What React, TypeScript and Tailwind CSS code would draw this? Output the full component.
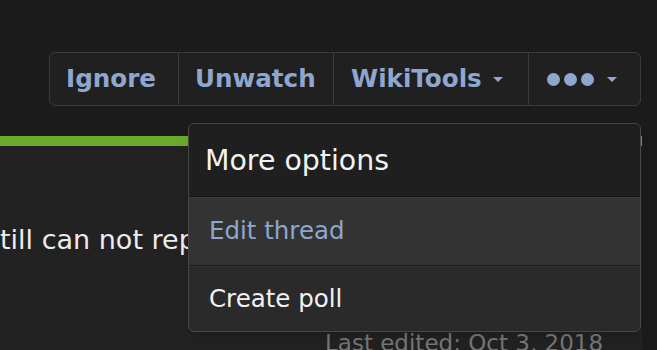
const font = { fontFamily: '"DejaVu Sans", Verdana, sans-serif' };

function Caret() {
  return (
    <span className="inline-block h-0 w-0 border-x-[5px] border-t-[5px] border-x-transparent border-t-[#8fa6cf]" />
  );
}

function ThreadActions() {
  return (
    <div className="ml-[49px] flex h-[54px] w-[592px] rounded-md border border-[#3b3b3b] bg-[#202020] text-[24.6px] font-bold text-[#8fa6cf]">
      <div className="flex w-[128px] items-center pl-[16px]">Ignore</div>
      <div className="flex w-[155px] items-center border-l border-[#3b3b3b] pl-[16px]">
        Unwatch
      </div>
      <div className="flex w-[195px] items-center gap-[11px] border-l border-[#3b3b3b] pl-[17px]">
        WikiTools
        <Caret />
      </div>
      <div className="flex flex-1 items-center gap-[13px] border-l border-[#3b3b3b] pl-[18px]">
        <div className="flex gap-[4px]">
          <span className="h-[13px] w-[13px] rounded-full bg-[#8fa6cf]" />
          <span className="h-[13px] w-[13px] rounded-full bg-[#8fa6cf]" />
          <span className="h-[13px] w-[13px] rounded-full bg-[#8fa6cf]" />
        </div>
        <Caret />
      </div>
    </div>
  );
}

function MoreOptionsMenu() {
  return (
    <div className="absolute left-[188px] top-[123px] w-[453px] overflow-hidden rounded-md border border-[#474747] bg-[#2a2a2a] shadow-lg">
      <div className="flex h-[72px] items-center bg-[#1f1f1f] pl-[16px] pt-[2px] text-[28.4px] text-[#f2f2f2]">
        More options
      </div>
      <div className="h-px bg-[#161616]" />
      <div className="h-px bg-[#3c3c3c]" />
      <div className="flex h-[67px] items-center bg-[#333333] pl-[20px] text-[24.5px] text-[#8fa6cf]">
        Edit thread
      </div>
      <div className="h-px bg-[#1c1c1c]" />
      <div className="h-px bg-[#333333]" />
      <div className="flex h-[64px] items-center pl-[20px] text-[24.5px] text-[#f2f2f2]">
        Create poll
      </div>
    </div>
  );
}

export default function App() {
  return (
    <div
      className="relative h-[350px] w-[657px] overflow-hidden bg-[#1b1b1b]"
      style={font}
    >
      <div className="pt-[52px]">
        <ThreadActions />
      </div>
      <div className="mt-[30px] h-[300px] w-[642px] border-t-[10px] border-[#6aaa2a] bg-[#222222]">
        <p className="whitespace-nowrap pt-[78px] text-[27px] leading-[32px] text-[#ececec]">
          till can not reproduce it on this build.
        </p>
        <p className="mt-[74px] pl-[325px] text-[23px] leading-[27px] text-[#777777]">
          Last edited: Oct 3, 2018
        </p>
      </div>
      <MoreOptionsMenu />
    </div>
  );
}
